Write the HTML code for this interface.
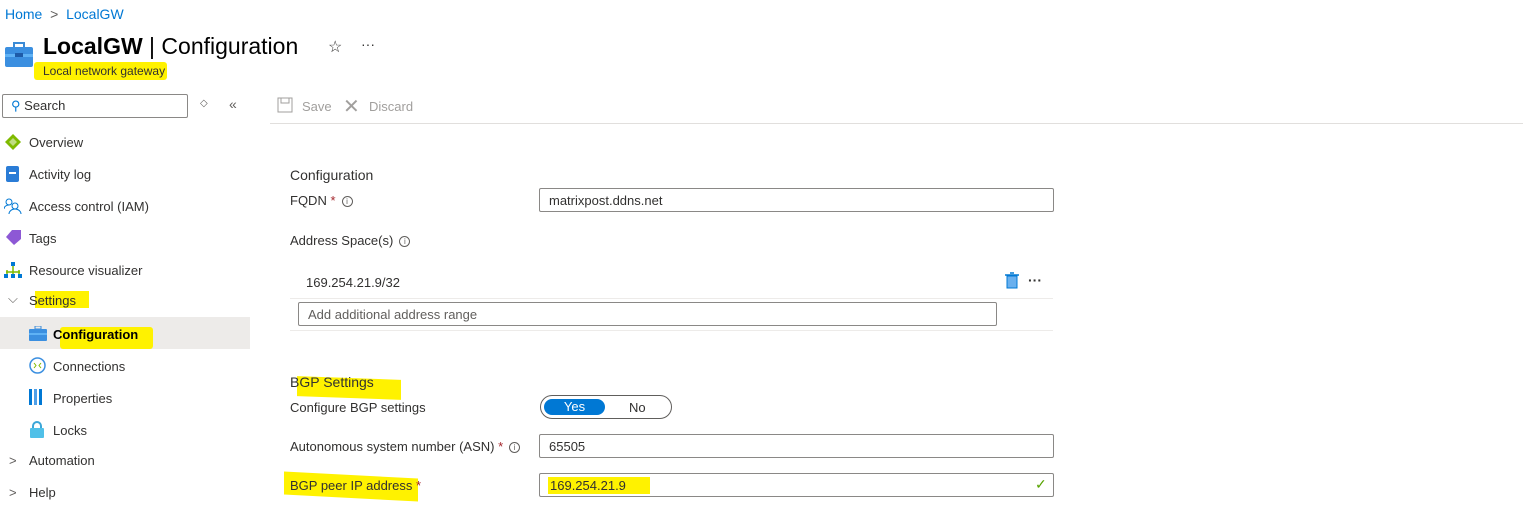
<!DOCTYPE html>
<html><head><meta charset="utf-8"><style>
*{margin:0;padding:0;box-sizing:border-box}
body{width:1523px;height:522px;background:#fff;font-family:"Liberation Sans",sans-serif;font-size:13px;color:#323130;position:relative;overflow:hidden}
.a{position:absolute;white-space:nowrap}
.hl{position:absolute;background:#fff200}
.inp{position:absolute;border:1px solid #8a8886;border-radius:2px;height:24px;padding:4px 9px;font-size:13px}
.req{color:#a4262c}
.info{display:inline-block;width:11px;height:11px;border:1px solid #605e5c;border-radius:50%;font-size:8px;text-align:center;line-height:9px;color:#605e5c;vertical-align:middle;margin-left:6px}
</style></head><body>
<div class="a" style="left:5px;top:6px;color:#0078d4;font-size:14px">Home <span style="color:#605e5c">&nbsp;&gt;&nbsp;</span> LocalGW</div>
<svg class="a" style="left:5px;top:42px" width="28" height="26"><rect x="9" y="1" width="10" height="5" fill="none" stroke="#3b8bd6" stroke-width="2"/><rect x="0" y="5" width="28" height="20" rx="2" fill="#3b8fe0"/><rect x="0" y="12" width="28" height="3" fill="#5fb2f5"/><rect x="10" y="11" width="8" height="4" fill="#1e5ba8"/></svg>
<div class="a" style="left:43px;top:33px;font-size:23px;color:#000"><b>LocalGW</b> | Configuration</div>
<div class="a" style="left:328px;top:37px;font-size:16px">☆</div>
<div class="a" style="left:361px;top:36px;font-size:14px">···</div>
<div class="hl" style="left:34px;top:62px;width:133px;height:18px;border-radius:3px"></div>
<div class="a" style="left:43px;top:64px;font-size:12px;color:#323130">Local network gateway</div>
<div class="inp" style="left:2px;top:94px;width:186px;height:24px;padding:3px 8px"><span style="color:#0078d4">⚲</span> Search</div>
<div class="a" style="left:200px;top:98px;font-size:10px;color:#605e5c">◇</div>
<div class="a" style="left:229px;top:96px;font-size:14px;color:#605e5c">«</div>
<svg class="a" style="left:277px;top:97px" width="16" height="16"><rect x="1" y="1" width="14" height="14" fill="none" stroke="#a19f9d"/><rect x="4" y="1" width="8" height="5" fill="none" stroke="#a19f9d"/></svg>
<div class="a" style="left:302px;top:99px;color:#a19f9d">Save</div>
<div class="a" style="left:343px;top:94px;font-size:20px;color:#a19f9d">✕</div>
<div class="a" style="left:369px;top:99px;color:#a19f9d">Discard</div>
<div class="a" style="left:270px;top:123px;width:1253px;height:1px;background:#e1dfdd"></div>
<!-- nav -->
<svg class="a" style="left:5px;top:134px" width="16" height="16"><path d="M8 0L16 8L8 16L0 8Z" fill="#7fba00"/><path d="M8 4L12 8L8 12L4 8Z" fill="#fff" opacity=".5"/></svg>
<div class="a" style="left:29px;top:135px">Overview</div>
<svg class="a" style="left:6px;top:166px" width="13" height="16"><rect width="13" height="16" rx="2" fill="#2a7cd6"/><rect x="3" y="6" width="7" height="2" fill="#fff"/></svg>
<div class="a" style="left:29px;top:167px">Activity log</div>
<svg class="a" style="left:4px;top:198px" width="18" height="16"><circle cx="5" cy="4" r="3" fill="none" stroke="#0078d4"/><circle cx="11" cy="8" r="3" fill="none" stroke="#0078d4"/><path d="M5 16a6 5 0 0 1 12 0M0 11a5 4 0 0 1 5-4" fill="none" stroke="#0078d4"/></svg>
<div class="a" style="left:29px;top:199px">Access control (IAM)</div>
<svg class="a" style="left:6px;top:230px" width="15" height="15"><path d="M6 0H15V9L8 15L0 7Z" fill="#8d58d5"/></svg>
<div class="a" style="left:29px;top:231px">Tags</div>
<svg class="a" style="left:4px;top:262px" width="18" height="16"><rect x="7" y="0" width="4" height="4" fill="#0078d4"/><path d="M9 4V8M2 10H16M3 8V12M9 8V12M15 8V12" stroke="#7fba00" stroke-width="1.5" fill="none"/><rect x="0" y="12" width="4" height="4" fill="#0078d4"/><rect x="7" y="12" width="4" height="4" fill="#0078d4"/><rect x="14" y="12" width="4" height="4" fill="#0078d4"/></svg>
<div class="a" style="left:29px;top:263px">Resource visualizer</div>
<div class="a" style="left:8px;top:291px;color:#605e5c">⌵</div>
<div class="hl" style="left:35px;top:291px;width:54px;height:17px"></div>
<div class="a" style="left:29px;top:293px">Settings</div>
<div class="a" style="left:0;top:317px;width:250px;height:32px;background:#edebe9"></div>
<div class="hl" style="left:60px;top:327px;width:93px;height:22px;border-radius:3px"></div>
<svg class="a" style="left:29px;top:326px" width="18" height="15"><rect x="6" y="0" width="6" height="3" fill="none" stroke="#3b8bd6"/><rect x="0" y="3" width="18" height="12" rx="1" fill="#3b8fe0"/><rect x="0" y="7" width="18" height="2" fill="#5fb2f5"/></svg>
<div class="a" style="left:53px;top:327px;color:#000;font-weight:bold">Configuration</div>
<svg class="a" style="left:29px;top:357px" width="17" height="17"><circle cx="8.5" cy="8.5" r="7.5" fill="none" stroke="#3b8fe0" stroke-width="1.5"/><path d="M5 6L7 8.5L5 11M12 6L10 8.5L12 11" stroke="#7fba00" fill="none"/></svg>
<div class="a" style="left:53px;top:359px">Connections</div>
<svg class="a" style="left:29px;top:389px" width="15" height="16"><rect x="0" y="0" width="3" height="16" fill="#0078d4"/><rect x="5" y="0" width="3" height="16" fill="#50a0e8"/><rect x="10" y="0" width="3" height="16" fill="#0078d4"/></svg>
<div class="a" style="left:53px;top:391px">Properties</div>
<svg class="a" style="left:30px;top:421px" width="14" height="17"><path d="M3 8V5a4 4 0 0 1 8 0V8" stroke="#3ba6d8" stroke-width="2" fill="none"/><rect x="0" y="7" width="14" height="10" rx="1" fill="#50c0e8"/></svg>
<div class="a" style="left:53px;top:423px">Locks</div>
<div class="a" style="left:9px;top:453px;color:#605e5c">&gt;</div>
<div class="a" style="left:29px;top:453px">Automation</div>
<div class="a" style="left:9px;top:485px;color:#605e5c">&gt;</div>
<div class="a" style="left:29px;top:485px">Help</div>
<!-- content -->
<div class="a" style="left:290px;top:167px;font-size:14px">Configuration</div>
<div class="a" style="left:290px;top:193px">FQDN <span class="req">*</span><span class="info">i</span></div>
<div class="inp" style="left:539px;top:188px;width:515px">matrixpost.ddns.net</div>
<div class="a" style="left:290px;top:233px">Address Space(s)<span class="info">i</span></div>
<div class="a" style="left:306px;top:275px">169.254.21.9/32</div>
<svg class="a" style="left:1005px;top:272px" width="14" height="17"><rect x="2" y="4" width="10" height="12" fill="#6ab0ee" stroke="#0078d4"/><path d="M0 3H14M5 1H9" stroke="#0078d4" stroke-width="1.5"/></svg>
<div class="a" style="left:1028px;top:272px;font-size:14px;font-weight:bold;color:#323130">···</div>
<div class="a" style="left:290px;top:298px;width:763px;height:1px;background:#edebe9"></div>
<div class="inp" style="left:298px;top:302px;width:699px;color:#605e5c">Add additional address range</div>
<div class="a" style="left:290px;top:330px;width:763px;height:1px;background:#edebe9"></div>
<div class="hl" style="left:297px;top:378px;width:104px;height:20px;transform:skewY(2deg)"></div>
<div class="a" style="left:290px;top:374px;font-size:14px">BGP Settings</div>
<div class="a" style="left:290px;top:400px">Configure BGP settings</div>
<div class="a" style="left:540px;top:395px;width:132px;height:24px;border:1px solid #605e5c;border-radius:12px"></div>
<div class="a" style="left:544px;top:399px;width:61px;height:16px;background:#0078d4;border-radius:8px;color:#fff;text-align:center;line-height:16px">Yes</div>
<div class="a" style="left:629px;top:400px">No</div>
<div class="a" style="left:290px;top:439px">Autonomous system number (ASN) <span class="req">*</span><span class="info">i</span></div>
<div class="inp" style="left:539px;top:434px;width:515px">65505</div>
<div class="hl" style="left:284px;top:475px;width:134px;height:23px;transform:skewY(3deg)"></div>
<div class="a" style="left:290px;top:478px">BGP peer IP address <span class="req">*</span></div>
<div class="inp" style="left:539px;top:473px;width:515px"></div>
<div class="hl" style="left:548px;top:477px;width:102px;height:17px"></div>
<div class="a" style="left:550px;top:478px">169.254.21.9</div>
<div class="a" style="left:1035px;top:476px;color:#57a300;font-size:14px">✓</div>
</body></html>
